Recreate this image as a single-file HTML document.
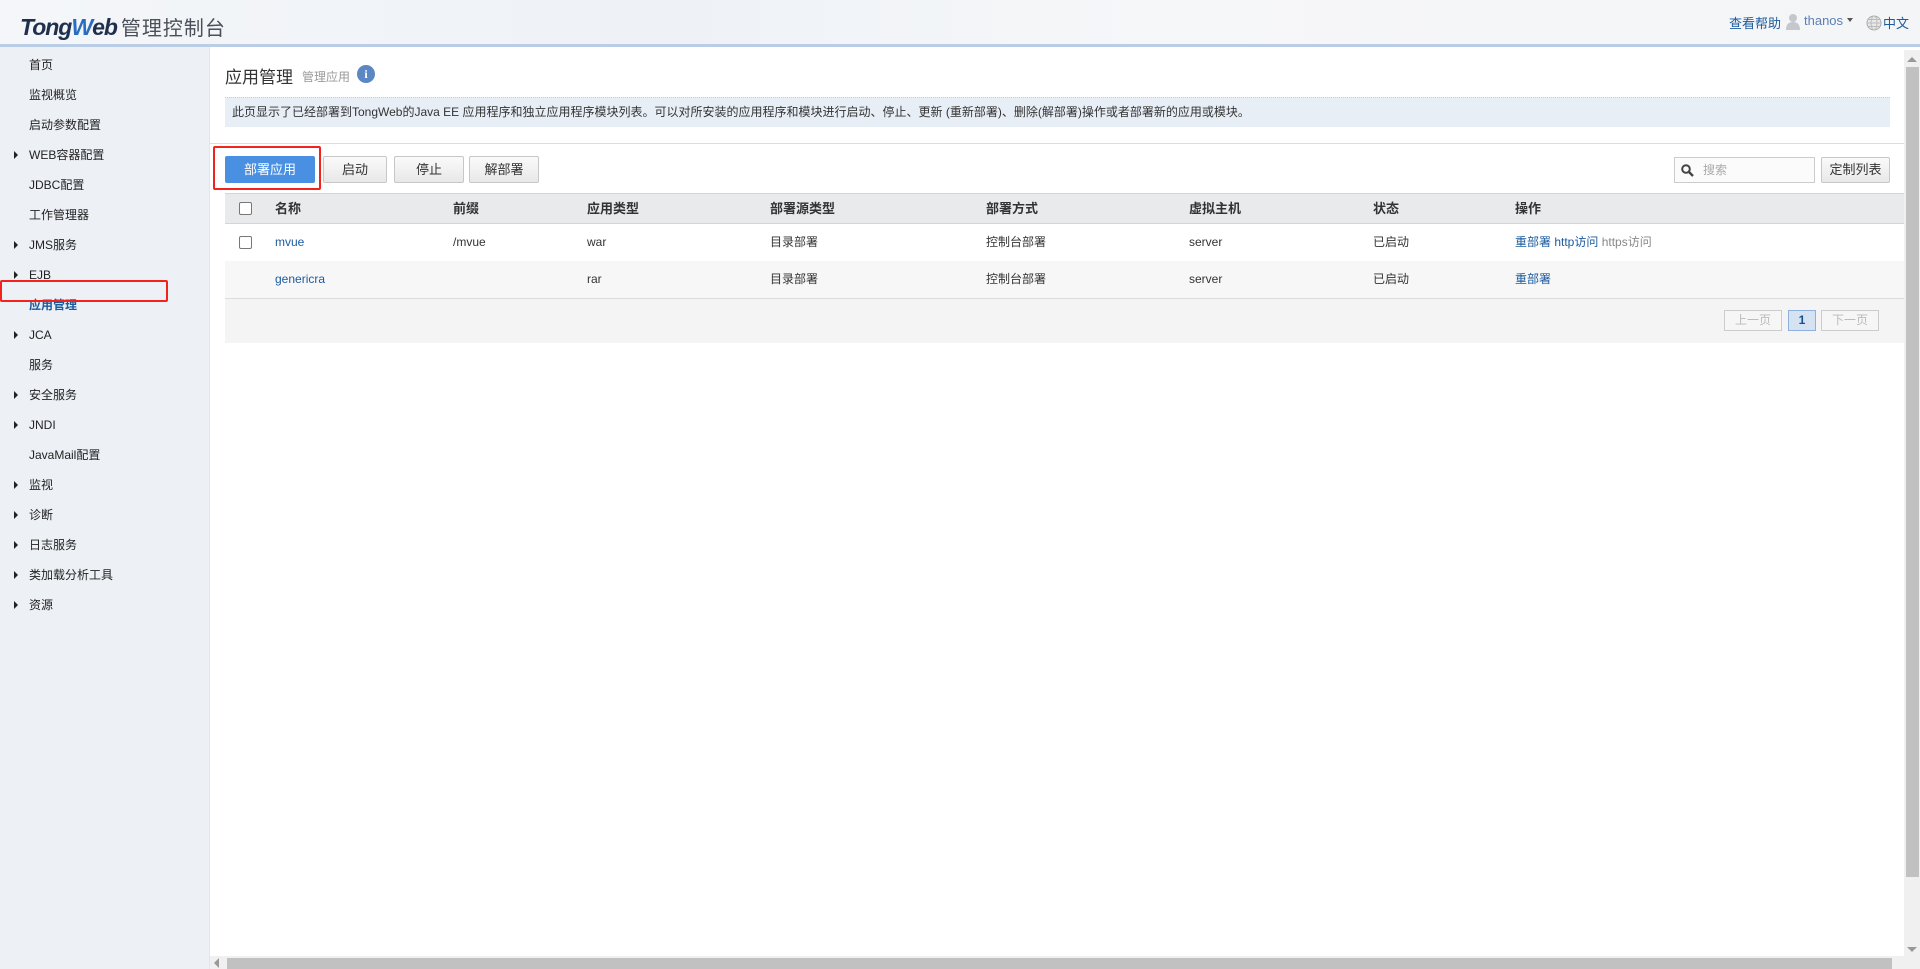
<!DOCTYPE html>
<html><head><meta charset="utf-8"><style>
*{box-sizing:border-box;margin:0;padding:0}
body{width:1920px;height:969px;overflow:hidden;background:#fff;font-family:"Liberation Sans","Noto Sans CJK SC",sans-serif;font-size:13px;color:#333;position:relative}
.hdr{position:absolute;left:0;top:0;width:1920px;height:47px;background:linear-gradient(90deg,#f4f6f9 0%,#eef2f7 35%,#f6f7f9 60%,#f4f5f7 100%);border-bottom:3px solid #b9cde6}
.logo{position:absolute;left:20px;top:12px;font-size:23px;font-weight:bold;font-style:italic;color:#1f2f4d;letter-spacing:-1px}
.logo b{color:#2a6dc0}
.logo span{font-style:normal;font-weight:normal;color:#4a4f58;font-size:20px;letter-spacing:1px;margin-left:4px}
.hr{position:absolute;top:13px;font-size:13px;color:#1a5a9e}
.side{position:absolute;left:0;top:47px;width:210px;height:922px;background:#edf0f5;border-right:1px solid #e2e5ea}
.side div{position:absolute;left:29px;font-size:12px;color:#222;line-height:16px}
.side div.t::before{content:"";position:absolute;left:-15px;top:4px;border-left:4px solid #222;border-top:4px solid transparent;border-bottom:4px solid transparent}
.side div.a{color:#1a5a9e;font-weight:bold}
.red{position:absolute;border:2px solid #f2231d;border-radius:2px}
.title{position:absolute;left:225px;top:63px;font-size:17px;color:#333}
.sub{position:absolute;left:302px;top:68px;font-size:12px;color:#999}
.info{position:absolute;left:279px;top:65px;width:18px;height:18px;border-radius:50%;background:#5b87c5;color:#fff;font-weight:bold;font-size:12px;text-align:center;line-height:18px;font-family:"Liberation Serif",serif}
.box{position:absolute;left:225px;top:97px;width:1665px;height:30px;background:#e8eef6;border-top:1px dotted #c8cdd4;padding-left:7px;line-height:29px;font-size:12px;color:#333}
.line{position:absolute;left:210px;top:143px;width:1694px;height:1px;background:#ddd}
.btn{position:absolute;top:156px;height:27px;border:1px solid #c7c7c7;background:linear-gradient(#fafafa,#e8e8e8);text-align:center;line-height:25px;font-size:13px;color:#333;border-radius:2px}
.btn.p{background:#4a90e2;border-color:#4a90e2;color:#fff}
.srch{position:absolute;left:1674px;top:157px;width:141px;height:26px;border:1px solid #ccc;background:#fbfbfb;font-size:12px;color:#aaa;line-height:24px;padding-left:28px}
.thd{position:absolute;left:225px;top:193px;width:1679px;height:31px;background:#e9eaec;border-top:1px solid #d5d5d5;border-bottom:1px solid #d5d5d5}
.row{position:absolute;left:225px;width:1679px;height:37px}
.cell{position:absolute;font-size:12px;line-height:14px}
.th{font-weight:bold;font-size:13px;color:#333}
.lnk{color:#1a5a9e}
.cb{position:absolute;width:13px;height:13px;border:1px solid #777;border-radius:2px;background:#fff}
.pg{position:absolute;left:225px;top:298px;width:1679px;height:45px;background:#f4f4f4;border-top:1px solid #ddd}
.pb{position:absolute;top:310px;height:21px;border:1px solid #ccc;font-size:12px;color:#bbb;text-align:center;line-height:19px;background:#f6f6f6}
.vs{position:absolute;left:1904px;top:50px;width:16px;height:906px;background:#f0f0f0}
.hs{position:absolute;left:210px;top:956px;width:1710px;height:13px;background:#f0f0f0}
</style></head><body>
<div class="hdr">
<div class="logo">Tong<b>W</b>eb<span>管理控制台</span></div>
<div class="hr" style="left:1729px">查看帮助</div>
<svg style="position:absolute;left:1785px;top:13px" width="16" height="17" viewBox="0 0 16 17"><circle cx="8" cy="5" r="4" fill="#c4c8cd"/><path d="M1 17 Q1 9 8 9 Q15 9 15 17Z" fill="#c4c8cd"/></svg>
<div class="hr" style="left:1804px;color:#5a7fb5">thanos</div>
<div style="position:absolute;left:1847px;top:18px;border-top:4px solid #555;border-left:3px solid transparent;border-right:3px solid transparent"></div>
<svg style="position:absolute;left:1866px;top:15px" width="16" height="16" viewBox="0 0 16 16"><circle cx="8" cy="8" r="7" fill="#e8e8e8" stroke="#aaa"/><ellipse cx="8" cy="8" rx="3" ry="7" fill="none" stroke="#bbb"/><path d="M1 8H15M2 4.5H14M2 11.5H14" stroke="#bbb"/></svg>
<div class="hr" style="left:1883px">中文</div>
</div>
<div class="side">
<div style="top:10px">首页</div>
<div style="top:40px">监视概览</div>
<div style="top:70px">启动参数配置</div>
<div class="t" style="top:100px">WEB容器配置</div>
<div style="top:130px">JDBC配置</div>
<div style="top:160px">工作管理器</div>
<div class="t" style="top:190px">JMS服务</div>
<div class="t" style="top:220px">EJB</div>
<div class="a" style="top:250px">应用管理</div>
<div class="t" style="top:280px">JCA</div>
<div style="top:310px">服务</div>
<div class="t" style="top:340px">安全服务</div>
<div class="t" style="top:370px">JNDI</div>
<div style="top:400px">JavaMail配置</div>
<div class="t" style="top:430px">监视</div>
<div class="t" style="top:460px">诊断</div>
<div class="t" style="top:490px">日志服务</div>
<div class="t" style="top:520px">类加载分析工具</div>
<div class="t" style="top:550px">资源</div>
</div>
<div class="red" style="left:0;top:280px;width:168px;height:22px"></div>
<div class="title">应用管理</div>
<div class="sub">管理应用</div>
<div class="info" style="left:357px">i</div>
<div class="box">此页显示了已经部署到TongWeb的Java EE 应用程序和独立应用程序模块列表。可以对所安装的应用程序和模块进行启动、停止、更新 (重新部署)、删除(解部署)操作或者部署新的应用或模块。</div>
<div class="line"></div>
<div class="btn p" style="left:225px;width:90px">部署应用</div>
<div class="btn" style="left:323px;width:64px">启动</div>
<div class="btn" style="left:394px;width:70px">停止</div>
<div class="btn" style="left:469px;width:70px">解部署</div>
<div class="red" style="left:213px;top:146px;width:108px;height:44px"></div>
<div class="srch">搜索</div>
<svg style="position:absolute;left:1681px;top:164px" width="13" height="13" viewBox="0 0 13 13"><circle cx="5" cy="5" r="3.8" fill="none" stroke="#444" stroke-width="2"/><path d="M8 8L12 12" stroke="#444" stroke-width="2.4"/></svg>
<div class="btn" style="left:1821px;top:157px;width:69px;height:26px;line-height:24px">定制列表</div>
<div class="thd">
<div class="cb" style="left:14px;top:8px"></div>
<div class="cell th" style="left:50px;top:8px">名称</div>
<div class="cell th" style="left:228px;top:8px">前缀</div>
<div class="cell th" style="left:362px;top:8px">应用类型</div>
<div class="cell th" style="left:545px;top:8px">部署源类型</div>
<div class="cell th" style="left:761px;top:8px">部署方式</div>
<div class="cell th" style="left:964px;top:8px">虚拟主机</div>
<div class="cell th" style="left:1148px;top:8px">状态</div>
<div class="cell th" style="left:1290px;top:8px">操作</div>
</div>
<div class="row" style="top:224px;background:#fff">
<div class="cb" style="left:14px;top:12px"></div>
<div class="cell lnk" style="left:50px;top:11px">mvue</div>
<div class="cell" style="left:228px;top:11px">/mvue</div>
<div class="cell" style="left:362px;top:11px">war</div>
<div class="cell" style="left:545px;top:11px">目录部署</div>
<div class="cell" style="left:761px;top:11px">控制台部署</div>
<div class="cell" style="left:964px;top:11px">server</div>
<div class="cell" style="left:1148px;top:11px">已启动</div>
<div class="cell" style="left:1290px;top:11px"><span class="lnk">重部署 http访问</span> <span style="color:#888">https访问</span></div>
</div>
<div class="row" style="top:261px;background:#f7f7f7">
<div class="cell lnk" style="left:50px;top:11px">genericra</div>
<div class="cell" style="left:362px;top:11px">rar</div>
<div class="cell" style="left:545px;top:11px">目录部署</div>
<div class="cell" style="left:761px;top:11px">控制台部署</div>
<div class="cell" style="left:964px;top:11px">server</div>
<div class="cell" style="left:1148px;top:11px">已启动</div>
<div class="cell lnk" style="left:1290px;top:11px">重部署</div>
</div>
<div class="pg"></div>
<div class="pb" style="left:1724px;width:58px">上一页</div>
<div class="pb" style="left:1788px;width:28px;background:#d5e2f2;border-color:#8fb0dc;color:#1a4f8f;font-weight:bold">1</div>
<div class="pb" style="left:1821px;width:58px">下一页</div>
<div class="vs"><div style="position:absolute;left:3px;top:7px;border-bottom:5px solid #999;border-left:5px solid transparent;border-right:5px solid transparent"></div><div style="position:absolute;left:2px;top:17px;width:13px;height:810px;background:#c1c1c1"></div><div style="position:absolute;left:3px;bottom:4px;border-top:5px solid #999;border-left:5px solid transparent;border-right:5px solid transparent"></div></div>
<div class="hs"><div style="position:absolute;left:4px;top:2px;border-right:5px solid #999;border-top:5px solid transparent;border-bottom:5px solid transparent"></div><div style="position:absolute;left:17px;top:2px;width:1665px;height:11px;background:#c1c1c1"></div></div>
</body></html>
